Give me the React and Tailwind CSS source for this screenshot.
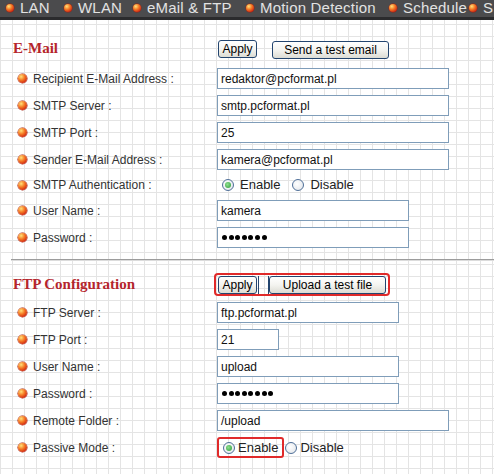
const NAV = [
  { label: 'LAN', w: 'w-[58px]' },
  { label: 'WLAN', w: 'w-[69px]' },
  { label: 'eMail & FTP', w: 'w-[113px]' },
  { label: 'Motion Detection', w: 'w-[143px]' },
  { label: 'Schedule', w: 'w-[80px]' },
  { label: 'S', w: 'w-[30px]' },
]

function Bullet({ size = 'w-[9px] h-[9px]' }) {
  return (
    <span
      className={`${size} shrink-0 rounded-full bg-[radial-gradient(circle_at_35%_30%,#ffe27a_0%,#f57a24_40%,#c8160e_85%)] shadow-[0_0_0_0.5px_#a0200f]`}
    />
  )
}

function Radio({ checked }) {
  return (
    <span className="flex h-[12px] w-[12px] shrink-0 items-center justify-center rounded-full border border-[#4f6f98] bg-[radial-gradient(circle_at_40%_40%,#ffffff,#dfe3e8)]">
      {checked && (
        <span className="h-[6px] w-[6px] rounded-full bg-[radial-gradient(circle_at_40%_40%,#8fe08f,#2a9a38)]" />
      )}
    </span>
  )
}

function Field({ value, width }) {
  return (
    <div
      className={`${width} flex h-[21px] items-center border border-[#7f9db9] bg-white pl-[3px] text-[12px] text-[#111]`}
    >
      {value}
    </div>
  )
}

function Secret({ count, width }) {
  return (
    <div
      className={`${width} flex h-[21px] items-center gap-[1.6px] border border-[#7f9db9] bg-white pl-[4px]`}
    >
      {Array.from({ length: count }).map((_, i) => (
        <span key={i} className="h-[5px] w-[5px] rounded-full bg-black" />
      ))}
    </div>
  )
}

function Row({ label, height = 'h-[27px]', children }) {
  return (
    <div className={`flex items-center ${height}`}>
      <div className="flex w-[217px] shrink-0 items-center pl-[18px]">
        <Bullet />
        <span className="ml-[6px] text-[12px] text-[#333]">{label}</span>
      </div>
      {children}
    </div>
  )
}

function Btn({ width, children }) {
  return (
    <button
      type="button"
      className={`${width} h-[18px] rounded-[3px] border border-[#23456f] bg-gradient-to-b from-white via-[#f4f4f0] to-[#dcdcd4] text-[12px] leading-none text-black`}
    >
      {children}
    </button>
  )
}

export default function App() {
  return (
    <div className="min-h-[474px] w-full overflow-hidden bg-white bg-[linear-gradient(#e4e4e4_1px,transparent_1px),linear-gradient(90deg,#e4e4e4_1px,transparent_1px)] bg-[length:12px_12px] bg-size-[12px_12px] font-['Liberation_Sans',Arial,sans-serif]">
      {/* top navigation */}
      <div className="flex h-[20px] items-center overflow-hidden whitespace-nowrap border-b-[3px] border-[#2b2b2d] bg-[#4b4b4d] pl-[6px] pb-[1px] text-[15px] tracking-[0.2px] text-[#e2e2e2]">
        {NAV.map((item) => (
          <div key={item.label} className={`${item.w} flex shrink-0 items-center`}>
            <Bullet size="w-[8px] h-[8px]" />
            <span className="ml-[6px]">{item.label}</span>
          </div>
        ))}
      </div>

      {/* E-Mail */}
      <div className="mt-[12px] flex h-[33px] items-center">
        <div className="w-[218px] shrink-0 pl-[13px] font-['Liberation_Serif','Times_New_Roman',serif] text-[15px] font-bold text-[#b5252c]">
          E-Mail
        </div>
        <Btn width="w-[39px]">Apply</Btn>
        <div className="ml-[15px]">
          <Btn width="w-[117px]">Send a test email</Btn>
        </div>
      </div>

      <Row label="Recipient E-Mail Address :">
        <Field value="redaktor@pcformat.pl" width="w-[232px]" />
      </Row>
      <Row label="SMTP Server :">
        <Field value="smtp.pcformat.pl" width="w-[232px]" />
      </Row>
      <Row label="SMTP Port :">
        <Field value="25" width="w-[232px]" />
      </Row>
      <Row label="Sender E-Mail Address :">
        <Field value="kamera@pcformat.pl" width="w-[232px]" />
      </Row>
      <Row label="SMTP Authentication :" height="h-[24px]">
        <div className="ml-[5px] flex items-center text-[13px] text-[#222]">
          <Radio checked />
          <span className="ml-[6px]">Enable</span>
          <span className="ml-[12px]">
            <Radio />
          </span>
          <span className="ml-[6px]">Disable</span>
        </div>
      </Row>
      <Row label="User Name :">
        <Field value="kamera" width="w-[192px]" />
      </Row>
      <Row label="Password :">
        <Secret count={7} width="w-[192px]" />
      </Row>

      <div className="ml-[11px] mt-[8px] h-[2px] border-t border-[#9c9c9c] bg-[#dcdcdc]" />

      {/* FTP */}
      <div className="mt-[9px] flex h-[29px] items-center">
        <div className="w-[214px] shrink-0 pl-[13px] font-['Liberation_Serif','Times_New_Roman',serif] text-[15px] font-bold text-[#b5252c]">
          FTP Configuration
        </div>
        <div className="flex h-[23px] items-center rounded-[4px] border-2 border-[#e02a2a] px-[2px]">
          <Btn width="w-[39px]">Apply</Btn>
          <span className="ml-[1px] h-[18px] w-[1px] bg-[#23456f]" />
          <span className="ml-[9px] h-[18px] w-[1px] bg-[#23456f]" />
          <Btn width="w-[117px]">Upload a test file</Btn>
        </div>
      </div>

      <Row label="FTP Server :">
        <Field value="ftp.pcformat.pl" width="w-[182px]" />
      </Row>
      <Row label="FTP Port :">
        <Field value="21" width="w-[62px]" />
      </Row>
      <Row label="User Name :">
        <Field value="upload" width="w-[182px]" />
      </Row>
      <Row label="Password :">
        <Secret count={8} width="w-[182px]" />
      </Row>
      <Row label="Remote Folder :">
        <Field value="/upload" width="w-[232px]" />
      </Row>
      <Row label="Passive Mode :">
        <div className="flex items-center text-[13px] text-[#222]">
          <div className="flex h-[21px] items-center rounded-[3px] border-2 border-[#e02a2a] pl-[4px] pr-[4px]">
            <Radio checked />
            <span className="ml-[3px]">Enable</span>
          </div>
          <span className="ml-[1px]">
            <Radio />
          </span>
          <span className="ml-[3px]">Disable</span>
        </div>
      </Row>
    </div>
  )
}
